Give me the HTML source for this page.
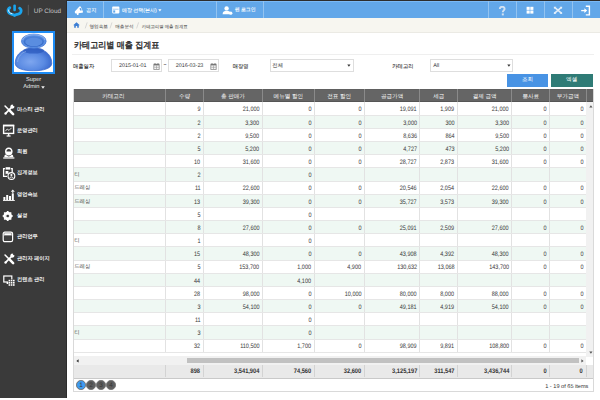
<!DOCTYPE html>
<html><head><meta charset="utf-8">
<style>
*{box-sizing:border-box;margin:0;padding:0}
html,body{width:600px;height:400px;overflow:hidden;background:#fff;font-family:"Liberation Sans",sans-serif;color:#333;text-rendering:geometricPrecision}
.abs{position:absolute}
#side{position:absolute;left:0;top:0;width:66.7px;height:398.3px;background:#3a3a3a;border-right:1.2px solid #2c2c2c}
#side .logo{position:absolute;left:0;top:0;width:66.7px;height:22px;background:#333}
#topline{position:absolute;left:66.7px;top:0;width:533.3px;height:1.2px;background:#2d2d2d}
#bar{position:absolute;left:66.7px;top:1.2px;width:533.3px;height:16.6px;background:#62a7e9}
#bar .sep{position:absolute;top:0;width:1px;height:16.6px;background:#93c3f0}
#bar .t{position:absolute;top:5.8px;font-size:5.2px;color:#fff;-webkit-text-stroke:0.1px #fff;line-height:8px;white-space:nowrap}
#crumb{position:absolute;left:66.7px;top:17.8px;width:533.3px;height:15px;background:#f7f6f0;border-bottom:1px solid #ebeae4}
#crumb .t{position:absolute;top:4.8px;font-size:4.6px;color:#555;-webkit-text-stroke:0.06px #555;line-height:7px;white-space:nowrap}
.menu{position:absolute;left:17px;font-size:5.2px;color:#fff;-webkit-text-stroke:0.15px #fff;line-height:6px;white-space:nowrap}

#title{position:absolute;left:74px;top:40.1px;font-size:8.8px;-webkit-text-stroke:0.4px #333;color:#333;line-height:11px;white-space:nowrap;transform:scaleX(0.92);transform-origin:0 0}
#tline{position:absolute;left:72px;top:54px;width:522px;height:0;border-top:1px solid #efefef}
.lbl{position:absolute;font-size:5.3px;color:#2a2a2a;-webkit-text-stroke:0.08px #2a2a2a;line-height:7px;margin-top:1.8px;white-space:nowrap}
.inp{position:absolute;height:13.2px;top:58.8px;border:1px solid #dedede;background:#fff;font-size:5.4px;color:#333;line-height:11.2px;white-space:nowrap;padding-top:1.2px}
.btn{position:absolute;top:74px;height:12.8px;font-size:5.6px;color:#fff;line-height:13.4px;text-align:center}
#grid{position:absolute;left:72.7px;top:89px;width:521.6px;height:303.3px;border:1px solid #d9d9d9;border-top:0;background:#fff;overflow:hidden}
table{border-collapse:collapse;table-layout:fixed}
#hd{position:absolute;left:-1px;top:0;width:522px;height:13px;background:#656565;box-shadow:inset 0 -1px 0 #555,inset 0 0.6px 0 #5c5c5c}
#hd table td{height:13px;color:#fff;font-size:5.6px;vertical-align:middle;line-height:13px;text-align:center;border-right:1px solid #8a8a8a;padding:0;white-space:nowrap;overflow:hidden}
#hd table td span{position:relative;top:2.3px}
#bd{position:absolute;left:-1px;top:13px;}
#bd td{height:13.18px;font-size:6.4px;color:#3a3a3a;text-align:right;padding:0 2.6px 0 0;border-right:1px solid #e2e2e2;border-bottom:1px solid #e6e6e6;white-space:nowrap;overflow:hidden;line-height:9px;padding-top:2.6px !important}
#bd td:first-child{text-align:left;padding-left:1.5px;font-size:5.4px}
#bd tr.alt td{background:#eff8f3}

#vs{position:absolute;left:512.8px;top:13px;width:8.3px;height:254.5px;background:#f1f1f1}
#hs{position:absolute;left:0;top:267.2px;width:512.5px;height:8.8px;background:#f1f1f1}
#hs .th{position:absolute;left:113px;top:2px;width:392px;height:4.6px;background:#c1c1c1}
#ft{position:absolute;left:-1px;top:276px;width:522px;height:13.6px;background:#e9e9e9;border-bottom:1.3px solid #c9c9c9}
#ft td{height:12.3px;font-size:6.6px;font-weight:bold;color:#333;text-align:right;padding:1.6px 2.6px 0 0;border-right:1px solid #d3d3d3;white-space:nowrap;line-height:10.5px}
.pg{position:absolute;top:291.3px;width:9.7px;height:9.7px;border-radius:50%;background:#5e5e5e;border:0.7px solid #727272;color:#383838;font-size:6.4px;line-height:9.8px;text-align:center}

#bd td b,#ft td b{display:inline-block;font-weight:normal;transform:scaleX(0.86);transform-origin:100% 50%}
#ft td b{font-weight:bold}
#bd td:first-child b{transform:none}
</style></head><body>
<div id="side">
  <div class="abs" style="left:33.8px;top:7.6px;font-size:6.4px;color:#c4c4c4;line-height:7px">UP Cloud</div>
  <svg class="abs" style="left:0;top:0" width="34" height="22" viewBox="0 0 34 22">
    <path d="M9.8,7.8 C7,9.6 7.6,13.2 11.4,14.2 C13,14.6 14,15 14.6,15.6 C15.2,15 16.4,14.6 18,14.2 C21.6,13.2 22,9.8 19.6,8.2" fill="none" stroke="#1aa5ee" stroke-width="2.8" stroke-linecap="round" stroke-linejoin="round"/>
    <path d="M8.6,10 C8.4,11.8 9.6,13.2 12,13.8" fill="none" stroke="#e4f5ff" stroke-width="1" stroke-linecap="round"/>
    <rect x="12.4" y="4.2" width="4.2" height="7.6" rx="1.6" fill="#3a3a3a"/>
    <rect x="13.3" y="4.6" width="2.6" height="6.6" rx="1.2" fill="#1aa5ee"/>
    <rect x="27.8" y="4.8" width="1.1" height="10.5" fill="#5a5a5a"/>
  </svg>
  <div class="abs" style="left:12.3px;top:31px;width:42.7px;height:42.7px;background:#fff;border:2px solid #1d8cf5"></div>
  <svg class="abs" style="left:12px;top:31px" width="43" height="43" viewBox="0 0 43 43">
    <defs>
      <radialGradient id="gb" cx="0.42" cy="0.6" r="0.62"><stop offset="0" stop-color="#7ea6ef"/><stop offset="0.6" stop-color="#5a8ae2"/><stop offset="1" stop-color="#3766cb"/></radialGradient>
      <linearGradient id="gh" x1="0" y1="0" x2="0" y2="1"><stop offset="0" stop-color="#4f86dc"/><stop offset="1" stop-color="#2f62c2"/></linearGradient>
      <radialGradient id="gh2" cx="0.5" cy="0.4" r="0.6"><stop offset="0" stop-color="#72a2ec"/><stop offset="1" stop-color="#4a7ed8"/></radialGradient>
    </defs>
    <path d="M3.2,32.2 C3.2,22.4 12,17.2 21.4,17.2 C30.8,17.2 39.8,22.4 39.8,32.2 C39.8,37.6 31,39.8 21.4,39.8 C11.8,39.8 3.2,37.6 3.2,32.2 Z" fill="url(#gb)" stroke="#3a69cc" stroke-width="0.7"/>
    <ellipse cx="21.6" cy="19.6" rx="10.5" ry="3" fill="#2d5cbf" opacity="0.75"/>
    <path d="M5.6,31 C6,25 10,21.5 14,20.5" fill="none" stroke="#a9c6f3" stroke-width="0.6" opacity="0.8"/>
    <ellipse cx="21.8" cy="10.2" rx="12.4" ry="7.2" fill="#5b8fe2" stroke="#3d6fd0" stroke-width="0.6"/>
    <ellipse cx="21.8" cy="10.4" rx="10.2" ry="5.4" fill="url(#gh)"/>
    <ellipse cx="21.8" cy="11" rx="8.6" ry="4.2" fill="#5a8de0"/>
    <path d="M10.6,9 C11.6,5.4 16.4,3.8 21.8,3.8 C27.2,3.8 32,5.4 33,9" fill="none" stroke="#bcd5f8" stroke-width="0.6"/>
  </svg>
  <div class="abs" style="left:0;width:66.7px;top:77px;text-align:center;font-size:5.7px;color:#ececec;line-height:6px;padding-left:0.6px">Super</div>
  <div class="abs" style="left:0;width:66.7px;top:84.2px;text-align:center;font-size:5.7px;color:#ececec;line-height:6px;padding-left:0.6px">Admin&nbsp;&nbsp;&nbsp;<svg style="position:absolute;left:40.8px;top:2px" width="4" height="3" viewBox="0 0 4 3"><path d="M0.2,0.2 L3.8,0.2 L2,2.8 Z" fill="#f2f2f2"/></svg></div>

  <svg class="abs" style="left:2.6px;top:103.6px" width="12" height="12" viewBox="0 0 14 14">
    <path d="M2.4,2.4 L7.6,7.6" stroke="#fff" stroke-width="1.8" stroke-linecap="round"/>
    <path d="M8.4,8.4 L11.8,11.8" stroke="#fff" stroke-width="3" stroke-linecap="round"/>
    <path d="M10.6,3.4 L3.4,10.6" stroke="#fff" stroke-width="2" stroke-linecap="round"/>
    <circle cx="11" cy="3" r="2.4" fill="#fff"/>
    <path d="M11.2,0.2 L14,0.2 L14,3 L12,2.2 Z" fill="#3a3a3a"/>
    <circle cx="3" cy="11" r="1.4" fill="#fff"/>
  </svg>
  <svg class="abs" style="left:2px;top:124px" width="14" height="14" viewBox="0 0 14 14">
    <rect x="1.6" y="1.4" width="10" height="8" fill="none" stroke="#fff" stroke-width="1.4"/>
    <rect x="1" y="0.8" width="11.2" height="1.6" fill="#fff"/>
    <path d="M3.4,7.2 L5.2,5 L7,6.4 L9.6,3.8" fill="none" stroke="#fff" stroke-width="0.8"/>
    <rect x="5.9" y="9.6" width="1.4" height="2.2" fill="#fff"/>
    <rect x="4.6" y="11.4" width="4" height="1.2" fill="#fff"/>
  </svg>
  <svg class="abs" style="left:2px;top:146px" width="14" height="14" viewBox="0 0 14 14" fill="#fff">
    <path d="M6.8,1.4 C9.3,1.4 10.6,3.2 10.6,5.4 C10.6,7.8 9,9.4 6.8,9.4 C4.6,9.4 3,7.8 3,5.4 C3,3.2 4.3,1.4 6.8,1.4 Z M6.8,3 C5.2,3 4.5,4.2 4.5,5.4 L9.1,5.4 C9.1,4.2 8.4,3 6.8,3 Z"/>
    <path d="M2.6,9.2 L3.8,8.6 C4.6,9.8 5.6,10.4 6.8,10.4 C8,10.4 9,9.8 9.8,8.6 L11,9.2 L11.4,11.2 L2.2,11.2 Z"/>
    <rect x="1.2" y="11.4" width="11.2" height="1.2"/>
  </svg>
  <svg class="abs" style="left:2px;top:166px" width="14" height="14" viewBox="0 0 14 14">
    <path d="M8.8,2.6 L10.2,2.6 L10.2,6.4 M5,10.4 L1.6,10.4 L1.6,2.6 L3,2.6" fill="none" stroke="#fff" stroke-width="1.3"/>
    <rect x="3.6" y="1.2" width="4.6" height="2.4" fill="#fff"/>
    <path d="M3.6,5 L3.6,8.4 L5,7.4 L6.4,8.4 L6.4,5" fill="#fff"/>
    <circle cx="9.4" cy="10" r="3.4" fill="#3a3a3a" stroke="#fff" stroke-width="1.1"/>
    <circle cx="9.4" cy="9" r="1.1" fill="#fff"/>
    <path d="M7.6,12 C8,10.6 10.8,10.6 11.2,12" fill="none" stroke="#fff" stroke-width="0.9"/>
  </svg>
  <svg class="abs" style="left:2px;top:188px" width="14" height="14" viewBox="0 0 14 14" fill="#fff">
    <rect x="1.4" y="9" width="2" height="3"/>
    <rect x="4.2" y="7" width="2" height="5"/>
    <rect x="7" y="8" width="2" height="4"/>
    <rect x="9.8" y="5.4" width="2" height="6.6"/>
    <path d="M10.8,1.4 L12.8,3.8 L8.8,3.8 Z"/>
    <rect x="10.3" y="3.6" width="1" height="1.8"/>
    <rect x="1" y="12" width="11.8" height="0.9"/>
  </svg>
  <svg class="abs" style="left:2px;top:210px" width="12" height="12" viewBox="0 0 12 12">
    <circle cx="5.7" cy="6" r="3.3" fill="none" stroke="#fff" stroke-width="2"/>
    <g stroke="#fff" stroke-width="1.7">
      <line x1="5.7" y1="1" x2="5.7" y2="11"/><line x1="0.7" y1="6" x2="10.7" y2="6"/>
      <line x1="2.2" y1="2.5" x2="9.2" y2="9.5"/><line x1="9.2" y1="2.5" x2="2.2" y2="9.5"/>
    </g>
    <circle cx="5.7" cy="6" r="1.3" fill="#3a3a3a"/>
  </svg>
  <svg class="abs" style="left:2px;top:230px" width="12" height="13" viewBox="0 0 12 13">
    <rect x="1.2" y="2.1" width="9.4" height="9.6" rx="1.6" fill="none" stroke="#fff" stroke-width="1.2"/>
    <rect x="2.2" y="3.2" width="7.4" height="2.4" fill="#fff"/>
    <rect x="2.6" y="5.6" width="6.6" height="5" fill="#3f3f3f"/>
  </svg>
  <svg class="abs" style="left:2.6px;top:252.6px" width="12" height="12" viewBox="0 0 14 14">
    <path d="M2.4,2.4 L7.6,7.6" stroke="#fff" stroke-width="1.8" stroke-linecap="round"/>
    <path d="M8.4,8.4 L11.8,11.8" stroke="#fff" stroke-width="3" stroke-linecap="round"/>
    <path d="M10.6,3.4 L3.4,10.6" stroke="#fff" stroke-width="2" stroke-linecap="round"/>
    <circle cx="11" cy="3" r="2.4" fill="#fff"/>
    <path d="M11.2,0.2 L14,0.2 L14,3 L12,2.2 Z" fill="#3a3a3a"/>
    <circle cx="3" cy="11" r="1.4" fill="#fff"/>
  </svg>
  <svg class="abs" style="left:2px;top:273.5px" width="14" height="14" viewBox="0 0 14 14">
    <rect x="1.8" y="2" width="8" height="6" fill="none" stroke="#fff" stroke-width="1.2"/>
    <rect x="4.6" y="8" width="2.4" height="2" fill="#fff"/>
    <rect x="6.2" y="5.4" width="6.6" height="6.8" fill="#3a3a3a"/>
    <g fill="#fff"><rect x="6.6" y="5.8" width="1.6" height="1.6"/><rect x="8.8" y="5.8" width="1.6" height="1.6"/><rect x="11" y="5.8" width="1.6" height="1.6"/>
    <rect x="6.6" y="8" width="1.6" height="1.6"/><rect x="8.8" y="8" width="1.6" height="1.6"/><rect x="11" y="8" width="1.6" height="1.6"/>
    <rect x="6.6" y="10.2" width="1.6" height="1.6"/><rect x="8.8" y="10.2" width="1.6" height="1.6"/><rect x="11" y="10.2" width="1.6" height="1.6"/></g>
  </svg>
  <div class="menu" style="top:106.5px">마스터 관리</div>
  <div class="menu" style="top:127.8px">운영관리</div>
  <div class="menu" style="top:149.1px">회원</div>
  <div class="menu" style="top:170.4px">집계정보</div>
  <div class="menu" style="top:191.7px">영업속보</div>
  <div class="menu" style="top:213px">설정</div>
  <div class="menu" style="top:234.3px">관리업무</div>
  <div class="menu" style="top:255.6px">관리자 페이지</div>
  <div class="menu" style="top:276.9px">컨텐츠 관리</div>
</div>
<div id="topline"></div>
<div id="bar"><div style="position:absolute;left:0;top:0;width:533.3px;height:1.2px;background:#7ab9f6"></div>
  <div class="sep" style="left:36.3px"></div>
  <div class="sep" style="left:149.3px"></div>
  <div class="sep" style="left:196px"></div>
  <div class="sep" style="left:421.3px"></div>
  <div class="sep" style="left:449.7px"></div>
  <div class="sep" style="left:477.7px"></div>
  <div class="sep" style="left:505.7px"></div>

  <svg class="abs" style="left:7px;top:4px" width="10" height="10" viewBox="0 0 10 10">
    <path d="M0.8,6.4 L5.4,1.6 Q6.2,1 6.8,1.8 L9,6.8 Q9.2,7.8 8.2,7.8 L1.8,8.4 Q0.6,8.2 0.8,6.4 Z" fill="#fff"/>
    <path d="M2.6,8 L4.8,7.8 L4.4,10 L3,10 Z" fill="#fff"/>
    <ellipse cx="6.6" cy="4.4" rx="0.8" ry="1.5" transform="rotate(-25 6.6 4.4)" fill="#5a9fe4"/>
  </svg>
  <svg class="abs" style="left:45px;top:4.6px" width="8" height="8" viewBox="0 0 8 8">
    <rect x="0.2" y="0.6" width="7.2" height="6.8" rx="0.8" fill="#fff"/>
    <rect x="1" y="2.8" width="5.6" height="0.7" fill="#7fb6ec"/>
    <rect x="1.2" y="4.4" width="2" height="2.2" fill="#62a7e9"/>
  </svg>
  <svg class="abs" style="left:155.5px;top:4.5px" width="11" height="9" viewBox="0 0 11 9" fill="#fff">
    <circle cx="4.6" cy="2.4" r="2.2"/>
    <path d="M0.6,8.2 C0.6,5.6 2.4,4.8 4.6,4.8 C6.8,4.8 8,5.6 8.2,6.6 L8.2,8.2 Z"/>
    <circle cx="8.8" cy="7.2" r="1.6"/>
  </svg>
  <svg class="abs" style="left:431px;top:4.5px" width="8" height="10" viewBox="0 0 8 10">
    <path d="M1.8,3 C1.8,1.3 3,0.8 4.2,0.8 C5.6,0.8 6.6,1.5 6.6,2.8 C6.6,4.3 4.8,4.5 4.8,6.2" fill="none" stroke="#d3e2f2" stroke-width="1.9"/>
    <rect x="3.8" y="7.4" width="2" height="2" fill="#d3e2f2"/>
  </svg>
  <svg class="abs" style="left:459.6px;top:4.9px" width="8" height="8" viewBox="0 0 8 8" fill="#fff">
    <rect x="0.6" y="0.8" width="3.1" height="3.1"/><rect x="4.3" y="0.8" width="3.1" height="3.1"/>
    <rect x="0.6" y="4.5" width="3.1" height="3.1"/><rect x="4.3" y="4.5" width="3.1" height="3.1"/>
  </svg>
  <svg class="abs" style="left:486.5px;top:4.6px" width="10" height="8.6" viewBox="0 0 10 10" preserveAspectRatio="none">
    <path d="M1.8,1.8 L8.2,8.2 M8.2,1.8 L1.8,8.2" stroke="#e3eefa" stroke-width="1.8"/>
    <path d="M0.8,0.8 L3.4,1 L1,3.4 Z M9.2,0.8 L6.6,1 L9,3.4 Z M0.8,9.2 L3.4,9 L1,6.6 Z M9.2,9.2 L6.6,9 L9,6.6 Z" fill="#e6f1fb"/>
  </svg>
  <svg class="abs" style="left:513px;top:3.5px" width="11" height="11" viewBox="0 0 11 11">
    <path d="M5.8,1.3 L9.4,1.3 L9.4,9.9 L5.8,9.9" fill="none" stroke="#fff" stroke-width="1.4"/>
    <path d="M1.2,5.6 L5.8,5.6" stroke="#fff" stroke-width="1.3"/>
    <path d="M4.4,3.2 L7.2,5.6 L4.4,8 Z" fill="#fff"/>
  </svg>
  <div class="t" style="left:19.3px">공지</div>
  <div class="t" style="left:55.3px;font-size:5px;top:6px">매장 선택(본사)</div><svg class="abs" style="left:91.7px;top:7.4px" width="4" height="3" viewBox="0 0 4 3"><path d="M0.3,0.3 L3.5,0.3 L1.9,2.6 Z" fill="#fff"/></svg>
  <div class="t" style="left:168px;font-size:4.9px;top:6px">웹 로그인</div>
</div>
<div id="crumb">

  <svg class="abs" style="left:6.5px;top:4.3px" width="7" height="6" viewBox="0 0 7 6" fill="#3d7fd4">
    <path d="M3.5,0.2 L6.8,3.2 L5.8,3.2 L5.8,5.8 L4.2,5.8 L4.2,4 L2.8,4 L2.8,5.8 L1.2,5.8 L1.2,3.2 L0.2,3.2 Z"/>
  </svg>
      <svg class="abs" style="left:0;top:0" width="100" height="15" viewBox="0 0 100 15"><path d="M20.2,4.4 L18.2,10.4 M45,4.4 L43,10.4 M71.6,4.4 L69.6,10.4" stroke="#cdcdcd" stroke-width="0.75"/></svg>
  <div class="t" style="left:22.8px">영업속보</div>
  <div class="t" style="left:48.5px">매출분석</div>
  <div class="t" style="left:75.1px;font-size:4.35px;top:5px">카테고리별 매출 집계표</div>
</div>

<div id="title">카테고리별 매출 집계표</div>
<div id="tline"></div>
<div class="lbl" style="left:73px;top:62px">매출일자</div>
<div class="inp" style="left:111px;width:51px"><span style="position:absolute;left:7px">2015-01-01</span><svg style="position:absolute;left:41px;top:3px" width="7" height="7" viewBox="0 0 7 7"><rect x="0.5" y="0.8" width="6" height="6" fill="#777"/><rect x="1.2" y="2.4" width="4.6" height="3.8" fill="#f4f4f4"/><path d="M3.5,2.4 V6.2 M1.2,4.3 H5.8" stroke="#999" stroke-width="0.6"/><rect x="1.6" y="0" width="0.8" height="1.4" fill="#777"/><rect x="4.6" y="0" width="0.8" height="1.4" fill="#777"/></svg></div>
<div class="lbl" style="left:163.4px;top:60px;font-size:5px">~</div>
<div class="inp" style="left:168.3px;width:51px"><span style="position:absolute;left:6.5px">2016-03-23</span><svg style="position:absolute;left:41px;top:3px" width="7" height="7" viewBox="0 0 7 7"><rect x="0.5" y="0.8" width="6" height="6" fill="#777"/><rect x="1.2" y="2.4" width="4.6" height="3.8" fill="#f4f4f4"/><path d="M3.5,2.4 V6.2 M1.2,4.3 H5.8" stroke="#999" stroke-width="0.6"/><rect x="1.6" y="0" width="0.8" height="1.4" fill="#777"/><rect x="4.6" y="0" width="0.8" height="1.4" fill="#777"/></svg></div>
<div class="lbl" style="left:232.7px;top:62px">매장명</div>
<div class="inp" style="left:270px;width:84px"><span style="position:absolute;left:1.3px">전체</span><svg style="position:absolute;left:76.4px;top:4.6px" width="4" height="3" viewBox="0 0 4 3"><path d="M0.3,0.4 L3.5,0.4 L1.9,2.7 Z" fill="#333"/></svg></div>
<div class="lbl" style="left:392.3px;top:62px">카테고리</div>
<div class="inp" style="left:429.7px;width:83px"><span style="position:absolute;left:2.5px">All</span><svg style="position:absolute;left:76px;top:4.6px" width="4" height="3" viewBox="0 0 4 3"><path d="M0.3,0.4 L3.5,0.4 L1.9,2.7 Z" fill="#333"/></svg></div>
<div class="btn" style="left:506.7px;width:41.6px;background:#4893e4">조회</div>
<div class="btn" style="left:550.8px;width:41.8px;background:#2f7b76">엑셀</div>
<div id="grid">
 <div id="hd"><table style="width:512.8px"><colgroup><col style="width:92.8px"><col style="width:38px"><col style="width:59px"><col style="width:51.7px"><col style="width:50px"><col style="width:55.8px"><col style="width:37.5px"><col style="width:54.5px"><col style="width:37.6px"><col style="width:36.7px"></colgroup><tr><td style="padding-right:11px"><span>카테고리</span></td><td><span>수량</span></td><td><span>총 판매가</span></td><td><span>메뉴별 할인</span></td><td><span>전표 할인</span></td><td><span>공급가액</span></td><td><span>세금</span></td><td><span>결제 금액</span></td><td><span>봉사료</span></td><td><span>부가금액</span></td></tr></table></div>
 <div id="bd"><table style="width:512.8px"><colgroup><col style="width:92.8px"><col style="width:38px"><col style="width:59px"><col style="width:51.7px"><col style="width:50px"><col style="width:55.8px"><col style="width:37.5px"><col style="width:54.5px"><col style="width:37.6px"><col style="width:36.7px"></colgroup>
<tr><td></td><td><b>9</b></td><td><b>21,000</b></td><td><b>0</b></td><td><b>0</b></td><td><b>19,091</b></td><td><b>1,909</b></td><td><b>21,000</b></td><td><b>0</b></td><td><b>0</b></td></tr>
<tr class="alt"><td></td><td><b>2</b></td><td><b>3,300</b></td><td><b>0</b></td><td><b>0</b></td><td><b>3,000</b></td><td><b>300</b></td><td><b>3,300</b></td><td><b>0</b></td><td><b>0</b></td></tr>
<tr><td></td><td><b>2</b></td><td><b>9,500</b></td><td><b>0</b></td><td><b>0</b></td><td><b>8,636</b></td><td><b>864</b></td><td><b>9,500</b></td><td><b>0</b></td><td><b>0</b></td></tr>
<tr class="alt"><td></td><td><b>5</b></td><td><b>5,200</b></td><td><b>0</b></td><td><b>0</b></td><td><b>4,727</b></td><td><b>473</b></td><td><b>5,200</b></td><td><b>0</b></td><td><b>0</b></td></tr>
<tr><td></td><td><b>10</b></td><td><b>31,600</b></td><td><b>0</b></td><td><b>0</b></td><td><b>28,727</b></td><td><b>2,873</b></td><td><b>31,600</b></td><td><b>0</b></td><td><b>0</b></td></tr>
<tr class="alt"><td><b>티</b></td><td><b>2</b></td><td></td><td><b>0</b></td><td></td><td></td><td></td><td></td><td></td><td></td></tr>
<tr><td><b>드레싱</b></td><td><b>11</b></td><td><b>22,600</b></td><td><b>0</b></td><td><b>0</b></td><td><b>20,546</b></td><td><b>2,054</b></td><td><b>22,600</b></td><td><b>0</b></td><td><b>0</b></td></tr>
<tr class="alt"><td><b>드레싱</b></td><td><b>13</b></td><td><b>39,300</b></td><td><b>0</b></td><td><b>0</b></td><td><b>35,727</b></td><td><b>3,573</b></td><td><b>39,300</b></td><td><b>0</b></td><td><b>0</b></td></tr>
<tr><td></td><td><b>5</b></td><td></td><td><b>0</b></td><td></td><td></td><td></td><td></td><td></td><td></td></tr>
<tr class="alt"><td></td><td><b>8</b></td><td><b>27,600</b></td><td><b>0</b></td><td><b>0</b></td><td><b>25,091</b></td><td><b>2,509</b></td><td><b>27,600</b></td><td><b>0</b></td><td><b>0</b></td></tr>
<tr><td><b>티</b></td><td><b>1</b></td><td></td><td><b>0</b></td><td></td><td></td><td></td><td></td><td></td><td></td></tr>
<tr class="alt"><td></td><td><b>15</b></td><td><b>48,300</b></td><td><b>0</b></td><td><b>0</b></td><td><b>43,908</b></td><td><b>4,392</b></td><td><b>48,300</b></td><td><b>0</b></td><td><b>0</b></td></tr>
<tr><td><b>드레싱</b></td><td><b>5</b></td><td><b>153,700</b></td><td><b>1,000</b></td><td><b>4,900</b></td><td><b>130,632</b></td><td><b>13,068</b></td><td><b>143,700</b></td><td><b>0</b></td><td><b>0</b></td></tr>
<tr class="alt"><td></td><td><b>44</b></td><td></td><td><b>4,100</b></td><td></td><td></td><td></td><td></td><td></td><td></td></tr>
<tr><td></td><td><b>28</b></td><td><b>98,000</b></td><td><b>0</b></td><td><b>10,000</b></td><td><b>80,000</b></td><td><b>8,000</b></td><td><b>88,000</b></td><td><b>0</b></td><td><b>0</b></td></tr>
<tr class="alt"><td></td><td><b>3</b></td><td><b>54,100</b></td><td><b>0</b></td><td><b>0</b></td><td><b>49,181</b></td><td><b>4,919</b></td><td><b>54,100</b></td><td><b>0</b></td><td><b>0</b></td></tr>
<tr><td></td><td><b>11</b></td><td></td><td><b>0</b></td><td></td><td></td><td></td><td></td><td></td><td></td></tr>
<tr class="alt"><td><b>티</b></td><td><b>3</b></td><td></td><td><b>0</b></td><td></td><td></td><td></td><td></td><td></td><td></td></tr>
<tr><td></td><td><b>32</b></td><td><b>110,500</b></td><td><b>1,700</b></td><td><b>0</b></td><td><b>98,909</b></td><td><b>9,891</b></td><td><b>108,800</b></td><td><b>0</b></td><td><b>0</b></td></tr>
 </table></div>
 <div id="vs"><svg style="position:absolute;left:2.2px;top:3.2px" width="4" height="3" viewBox="0 0 4 3"><path d="M0.3,2.6 L3.5,2.6 L1.9,0.3 Z" fill="#555"/></svg><svg style="position:absolute;left:2.2px;top:249.4px" width="4" height="3" viewBox="0 0 4 3"><path d="M0.3,0.4 L3.5,0.4 L1.9,2.7 Z" fill="#555"/></svg></div>
 <div id="hs"><svg style="position:absolute;left:2.8px;top:2.6px" width="3" height="4" viewBox="0 0 3 4"><path d="M2.6,0.2 L2.6,3.6 L0.3,1.9 Z" fill="#333"/></svg><div class="th"></div><svg style="position:absolute;left:507.8px;top:2.6px" width="3" height="4" viewBox="0 0 3 4"><path d="M0.4,0.2 L0.4,3.6 L2.6,1.9 Z" fill="#555"/></svg></div>
 <div id="ft"><table style="width:512.8px"><colgroup><col style="width:92.8px"><col style="width:38px"><col style="width:59px"><col style="width:51.7px"><col style="width:50px"><col style="width:55.8px"><col style="width:37.5px"><col style="width:54.5px"><col style="width:37.6px"><col style="width:36.7px"></colgroup><tr><td></td><td><b>898</b></td><td><b>3,541,904</b></td><td><b>74,560</b></td><td><b>32,600</b></td><td><b>3,125,197</b></td><td><b>311,547</b></td><td><b>3,436,744</b></td><td><b>0</b></td><td><b>0</b></td></tr></table></div>
 <div class="pg" style="left:2.5px;background:#3e9bf0">1</div>
 <div class="pg" style="left:12.5px">2</div>
 <div class="pg" style="left:22.5px">3</div>
 <div class="pg" style="left:32.5px">4</div>
 <div style="position:absolute;left:471.5px;top:295px;font-size:5.6px;color:#333;white-space:nowrap;line-height:6px">1 - 19 of 65 items</div>
</div>

</body></html>
